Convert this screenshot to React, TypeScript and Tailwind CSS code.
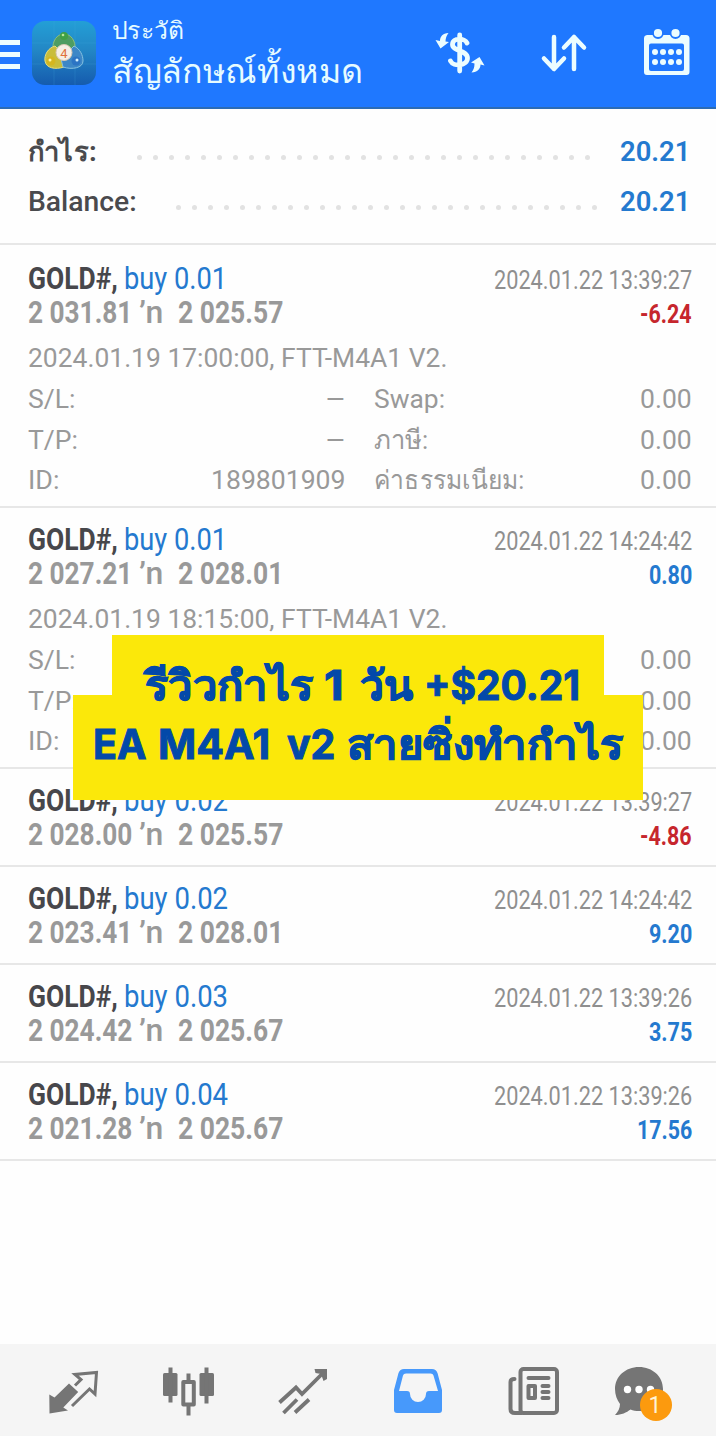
import { useLayoutEffect, useRef, useState } from 'react'
import type { ReactNode } from 'react'
import clsx from 'clsx'

type Deal = {
  lots: string
  open: string
  close: string
  time: string
  profit: string
  profitWidth: number
  opened?: string
  id?: string
}

const deals: Deal[] = [
  {
    lots: '0.01',
    open: '2 031.81',
    close: '2 025.57',
    time: '2024.01.22 13:39:27',
    profit: '-6.24',
    profitWidth: 52,
    opened: '2024.01.19 17:00:00, FTT-M4A1 V2.',
    id: '189801909',
  },
  {
    lots: '0.01',
    open: '2 027.21',
    close: '2 028.01',
    time: '2024.01.22 14:24:42',
    profit: '0.80',
    profitWidth: 43,
    opened: '2024.01.19 18:15:00, FTT-M4A1 V2.',
  },
  { lots: '0.02', open: '2 028.00', close: '2 025.57', time: '2024.01.22 13:39:27', profit: '-4.86', profitWidth: 52 },
  { lots: '0.02', open: '2 023.41', close: '2 028.01', time: '2024.01.22 14:24:42', profit: '9.20', profitWidth: 43 },
  { lots: '0.03', open: '2 024.42', close: '2 025.67', time: '2024.01.22 13:39:26', profit: '3.75', profitWidth: 43 },
  { lots: '0.04', open: '2 021.28', close: '2 025.67', time: '2024.01.22 13:39:26', profit: '17.56', profitWidth: 55 },
]

// Condenses or stretches a line of text to the given width
const Fit = ({ width, className, children }: { width: number; className?: string; children: ReactNode }) => {
  const ref = useRef<HTMLSpanElement>(null)
  const [scale, setScale] = useState(1)

  useLayoutEffect(() => {
    if (ref.current) setScale(width / ref.current.offsetWidth)
  }, [width, children])

  return (
    <span className={clsx('block shrink-0 whitespace-nowrap', className)} style={{ width }}>
      <span ref={ref} className="inline-block origin-left align-top" style={{ transform: `scaleX(${scale})` }}>
        {children}
      </span>
    </span>
  )
}

const AppLogo = () => (
  <svg viewBox="0 0 64 64" className="ml-3 size-16 shrink-0">
    <defs>
      <linearGradient id="logo" x1="0" y1="0" x2="0" y2="1">
        <stop offset="0" stopColor="#239fd6" />
        <stop offset="0.45" stopColor="#2387c5" />
        <stop offset="1" stopColor="#155bae" />
      </linearGradient>
    </defs>
    <rect width="64" height="64" rx="13" fill="url(#logo)" />
    <path d="M0 22H64M0 43H64M22 0V64M43 0V64" stroke="#46a8dc" strokeOpacity="0.2" />
    <path d="M21 29c-1-9 4-16 11-16s12 7 11 16l-5 6H27z" fill="#4e9d62" stroke="#8cbf7b" />
    <path d="M23 25c-7 2-11 9-10 15 1 7 10 9 19 6l3-9z" fill="#c9bd3a" stroke="#e8dd7c" />
    <path d="M42 25c6 3 9 9 9 15 0 7-11 9-20 6l-2-8z" fill="#3d87c7" stroke="#87c2df" />
    <circle cx="32" cy="15" r="4" fill="#3fa046" />
    <circle cx="31" cy="14" r="1.3" fill="#b9e69a" />
    <circle cx="19" cy="40" r="4.5" fill="#d5b61f" />
    <circle cx="18" cy="39" r="1.5" fill="#fff5a6" />
    <circle cx="44" cy="40" r="4.5" fill="#2c74c4" />
    <circle cx="45" cy="39" r="1.5" fill="#d6f1ff" />
    <circle cx="32" cy="31.5" r="8" fill="#f6efe6" stroke="#d9c8b4" />
    <text x="32" y="36.5" textAnchor="middle" fontFamily="Roboto" fontSize="13" fill="#e0713d">
      4
    </text>
  </svg>
)

const Header = () => (
  <header className="flex h-[109px] items-start border-b-2 border-[#2c6cb5] bg-[#1f78ff] pt-[21px] text-[#e6fbff]">
    <div className="mt-[19px] flex w-5 shrink-0 flex-col gap-[7px]">
      <span className="h-[5px] bg-[#ecfdff]" />
      <span className="h-[5px] bg-[#ecfdff]" />
      <span className="h-[5px] bg-[#ecfdff]" />
    </div>
    <AppLogo />
    <div className="-mt-2 ml-4 w-[252px] shrink-0">
      <Fit width={72} className="text-[24px] leading-[36px]">ประวัติ</Fit>
      <Fit width={251} className="text-[33px] leading-[46px]">สัญลักษณ์ทั้งหมด</Fit>
    </div>
    <svg viewBox="434 28 52 50" className="ml-[70px] mt-[7px] h-[50px] w-[52px] shrink-0" fill="none" stroke="#ecfdff" strokeWidth="4.8" strokeLinecap="round">
      <path d="M459.7 35V71M467 43c-2-5-14.500-6-14.500 1.500 0 7 15 5.500 15 13.500 0 8-14 9-17 3" />
      <path d="M448.500 33c-6 0-8.500 4-8.500 8l-4.500-1 5 8.500 8.500-6.500-3.500-.5c0-3 1-6 3-8.500zM471.500 72.500c6 0 9-4 9-8l4 1-5-8.500-8.500 5.500 3.500 1c0 4-1 6-3 9z" fill="#ecfdff" stroke="none" />
    </svg>
    <svg viewBox="539 31 50 44" className="ml-[53px] mt-[10px] h-[44px] w-[50px] shrink-0" fill="none" stroke="#ecfdff" strokeWidth="4.500" strokeLinecap="round" strokeLinejoin="round">
      <path d="M554 37V69M544 58.500L554 69L564 58.500M574 69V37M564 47.500L574 37L584 47.500" />
    </svg>
    <svg viewBox="641 26 51 52" className="ml-[52px] mt-[5px] h-[52px] w-[51px] shrink-0" fill="#ecfdff">
      <path fillRule="evenodd" d="M647 35H686a3.500 3.500 0 0 1 3.500 3.500V72a3 3 0 0 1-3 3H647a3 3 0 0 1-3-3V38.500a3.500 3.500 0 0 1 3-3.500zM651 43.500a2 2 0 0 0-2 2V69a2 2 0 0 0 2 2H682a2 2 0 0 0 2-2V45.500a2 2 0 0 0-2-2z" />
      <g stroke="#1f78ff" strokeWidth="1.800">
        <circle cx="658" cy="33" r="5" />
        <circle cx="675.500" cy="33" r="5" />
      </g>
      {[655, 663, 671, 679].map((x) => (
        <g key={x}>
          <circle cx={x} cy="52" r="3" />
          <circle cx={x} cy="62" r="3" />
        </g>
      ))}
    </svg>
  </header>
)

const Dots = ({ count }: { count: number }) => (
  <span className="mt-2.5 flex shrink-0 gap-[11px]">
    {Array.from({ length: count }, (_, i) => (
      <i key={i} className="size-[5px] rounded-full bg-[#e2e2e2]" />
    ))}
  </span>
)

const Summary = () => (
  <section className="h-[136px] border-b-2 border-[#e7e7e7] pl-7 pr-[26px] pt-[18px] text-[27px] font-medium leading-[50px] text-[#4a4a4d]">
    <div className="flex h-[50px] items-center">
      <Fit width={69} className="font-bold">กำไร:</Fit>
      <div className="ml-[40px]">
        <Dots count={29} />
      </div>
      <Fit width={70} className="ml-auto font-semibold text-[#2479cf]">20.21</Fit>
    </div>
    <div className="flex h-[50px] items-center">
      <Fit width={109}>Balance:</Fit>
      <div className="ml-[39px]">
        <Dots count={27} />
      </div>
      <Fit width={70} className="ml-auto font-semibold text-[#2479cf]">20.21</Fit>
    </div>
  </section>
)

const DealDetails = ({ deal }: { deal: Deal }) => (
  <div className="mt-[9px] text-[26px] text-[#999]">
    <Fit width={419} className="leading-[41px]">{deal.opened}</Fit>
    <div className="grid grid-cols-[318px_1fr] gap-x-[28px] leading-[40.5px]">
      <div className="flex justify-between">
        <Fit width={47}>S/L:</Fit>
        {deal.id && <Fit width={21}>–</Fit>}
      </div>
      <div className="flex justify-between">
        {deal.id && <Fit width={71}>Swap:</Fit>}
        <Fit width={52} className="ml-auto">0.00</Fit>
      </div>
      <div className="flex justify-between">
        <Fit width={50}>T/P:</Fit>
        {deal.id && <Fit width={21}>–</Fit>}
      </div>
      <div className="flex justify-between">
        {deal.id && <Fit width={54}>ภาษี:</Fit>}
        <Fit width={52} className="ml-auto">0.00</Fit>
      </div>
      <div className="flex justify-between">
        <Fit width={31}>ID:</Fit>
        {deal.id && <Fit width={135}>{deal.id}</Fit>}
      </div>
      <div className="flex justify-between">
        {deal.id && <Fit width={150}>ค่าธรรมเนียม:</Fit>}
        <Fit width={52} className="ml-auto">0.00</Fit>
      </div>
    </div>
  </div>
)

const DealRow = ({ deal }: { deal: Deal }) => {
  const isLoss = deal.profit.startsWith('-')

  return (
    <li
      className={clsx(
        'border-b-2 border-[#e7e7e7] pl-7 pr-6 pt-3.5 first:h-[263px] first:pt-4',
        deal.opened ? 'h-[261px]' : 'h-[98px]',
      )}
    >
      <div className="flex h-[34px] text-[32px] leading-[34px]">
        <Fit width={90} className="font-bold text-[#47474b]">GOLD#,</Fit>
        <Fit width={deal.lots === '0.01' ? 103 : 104} className="ml-[6px] text-[#2479cf]">buy {deal.lots}</Fit>
        <Fit width={198} className="ml-auto pt-0.5 text-[26px] text-[#8f8f8f]">{deal.time}</Fit>
      </div>
      <div className="flex h-[34px] text-[32px] font-bold leading-[34px] text-[#999]">
        <Fit width={104}>{deal.open}</Fit>
        <Fit width={24} className="ml-[7px] font-medium">’n</Fit>
        <Fit width={105} className="ml-[15px]">{deal.close}</Fit>
        <Fit
          width={deal.profitWidth}
          className={clsx('ml-auto pt-0.5 text-[26px]', isLoss ? 'text-[#c6262d]' : 'text-[#2479cf]')}
        >
          {deal.profit}
        </Fit>
      </div>
      {deal.opened && <DealDetails deal={deal} />}
    </li>
  )
}

const Banner = () => (
  <div className="absolute left-[73px] top-[635px] flex w-[570px] flex-col items-center font-['Inter','Noto_Sans',sans-serif] text-[41px] font-bold text-[#0349a9] [-webkit-text-stroke:1px_#0349a9]">
    <div className="flex h-[60px] w-[492px] bg-[#fbe80a] pl-[33px] pt-[20px] leading-[60px]">
      <Fit width={168}>รีวิวกำไร</Fit>
      <Fit width={20} className="ml-[11px]">1</Fit>
      <Fit width={53} className="ml-[16px]">วัน</Fit>
      <Fit width={156} className="ml-[11px]">+$20.21</Fit>
    </div>
    <div className="flex h-[105px] w-full bg-[#fbe80a] pl-5 pt-[19px] leading-[60px]">
      <Fit width={54}>EA</Fit>
      <Fit width={112} className="ml-[11px]">M4A1</Fit>
      <Fit width={48} className="ml-[17px]">v2</Fit>
      <Fit width={276} className="ml-[12px]">สายซิ่งทำกำไร</Fit>
    </div>
  </div>
)

const BottomNav = () => (
  <nav className="mt-auto flex h-[92px] shrink-0 gap-[39px] bg-[#f5f5f5] pl-[35px] pt-4">
    <svg viewBox="35 1360 76 60" className="h-[60px] w-[76px]" fill="#757575">
      <path d="M49.300 1394.500L54.500 1397.500L69 1383.500L78.200 1392L63.300 1407.500L68 1410.500L49.500 1413.500Z" />
      <path d="M75 1385.500L81 1379.500L75 1374.500L96.500 1372.500L95 1394L89.500 1389L72 1406" fill="none" stroke="#757575" strokeWidth="3" />
    </svg>
    <svg viewBox="150 1360 76 60" className="h-[60px] w-[76px]" fill="#757575">
      <rect x="163" y="1373" width="14.500" height="23" rx="1.500" />
      <rect x="199.500" y="1373" width="14.500" height="23" rx="1.500" />
      <rect x="183.300" y="1382" width="10.500" height="22.500" fill="none" stroke="#757575" strokeWidth="4" strokeLinejoin="round" />
      <path d="M170.500 1367.500V1402.500M206.500 1367.500V1403.500M188.500 1373.500V1381M188.500 1405V1415.500" stroke="#757575" strokeWidth="4" />
    </svg>
    <svg viewBox="265 1360 76 60" className="h-[60px] w-[76px]" fill="none" stroke="#757575" strokeWidth="3.800">
      <path d="M279.500 1402.500L296 1387.500L302 1394L325 1371M283.500 1413L297 1399.500M295 1412.500L309 1399.500" />
      <path d="M314.500 1369H327V1379L323.500 1381L321 1374L315.500 1373Z" fill="#757575" stroke="none" />
    </svg>
    <svg viewBox="380 1360 76 60" className="h-[60px] w-[76px]" fill="#4799fb">
      <path fillRule="evenodd" d="M404 1369H432q4 0 5.500 4l4.500 17v20q0 3-3 3H397q-3 0-3-3v-20l4.500-17q1.500-4 5.500-4zM406 1373.500q-2.500 0-3 2L399 1391h8q3 0 3 3a8 8 0 0 0 16 0q0-3 3-3h9l-4.500-15.500q-.5-2-3-2z" />
    </svg>
    <svg viewBox="495 1360 76 60" className="h-[60px] w-[76px]" fill="none" stroke="#757575" strokeWidth="4" strokeLinecap="round">
      <rect x="520.500" y="1369" width="36.500" height="44" rx="3" />
      <path d="M514.500 1379Q510.500 1379 510.500 1382V1409Q510.500 1413 515 1413H522" />
      <path d="M528.500 1378H548.500M542.500 1386H548.500M542.500 1392H548.500M542.500 1398H548.500" />
      <rect x="528.500" y="1386" width="6.500" height="12" strokeLinejoin="round" />
    </svg>
    <svg viewBox="610 1360 76 63" className="h-[63px] w-[76px]" fill="#757575">
      <path d="M639 1367c13.500 0 24 9.500 24 22s-10.500 22-24 22c-3 0-6-.5-8.500-1.500-4 3-9 5.500-15.500 5.500 3-3 5-7 5-11-3-4-5-9-5-15 0-12.500 10.500-22 24-22z" />
      <g fill="#fff">
        <circle cx="627.500" cy="1389.500" r="3.700" />
        <circle cx="639" cy="1389.500" r="3.700" />
        <circle cx="650.500" cy="1389.500" r="3.700" />
      </g>
      <circle cx="656" cy="1405" r="16" fill="#fc9a0e" />
      <text x="655" y="1413" textAnchor="middle" fontFamily="Roboto" fontSize="23" fill="#fff3d6">
        1
      </text>
    </svg>
  </nav>
)

export default function App() {
  return (
    <div className="relative flex h-[1436px] w-[716px] flex-col overflow-hidden bg-[#fefefe] font-['Roboto','Noto_Sans',sans-serif]">
      <Header />
      <Summary />
      <ul>
        {deals.map((deal, i) => (
          <DealRow key={i} deal={deal} />
        ))}
      </ul>
      <Banner />
      <BottomNav />
    </div>
  )
}
